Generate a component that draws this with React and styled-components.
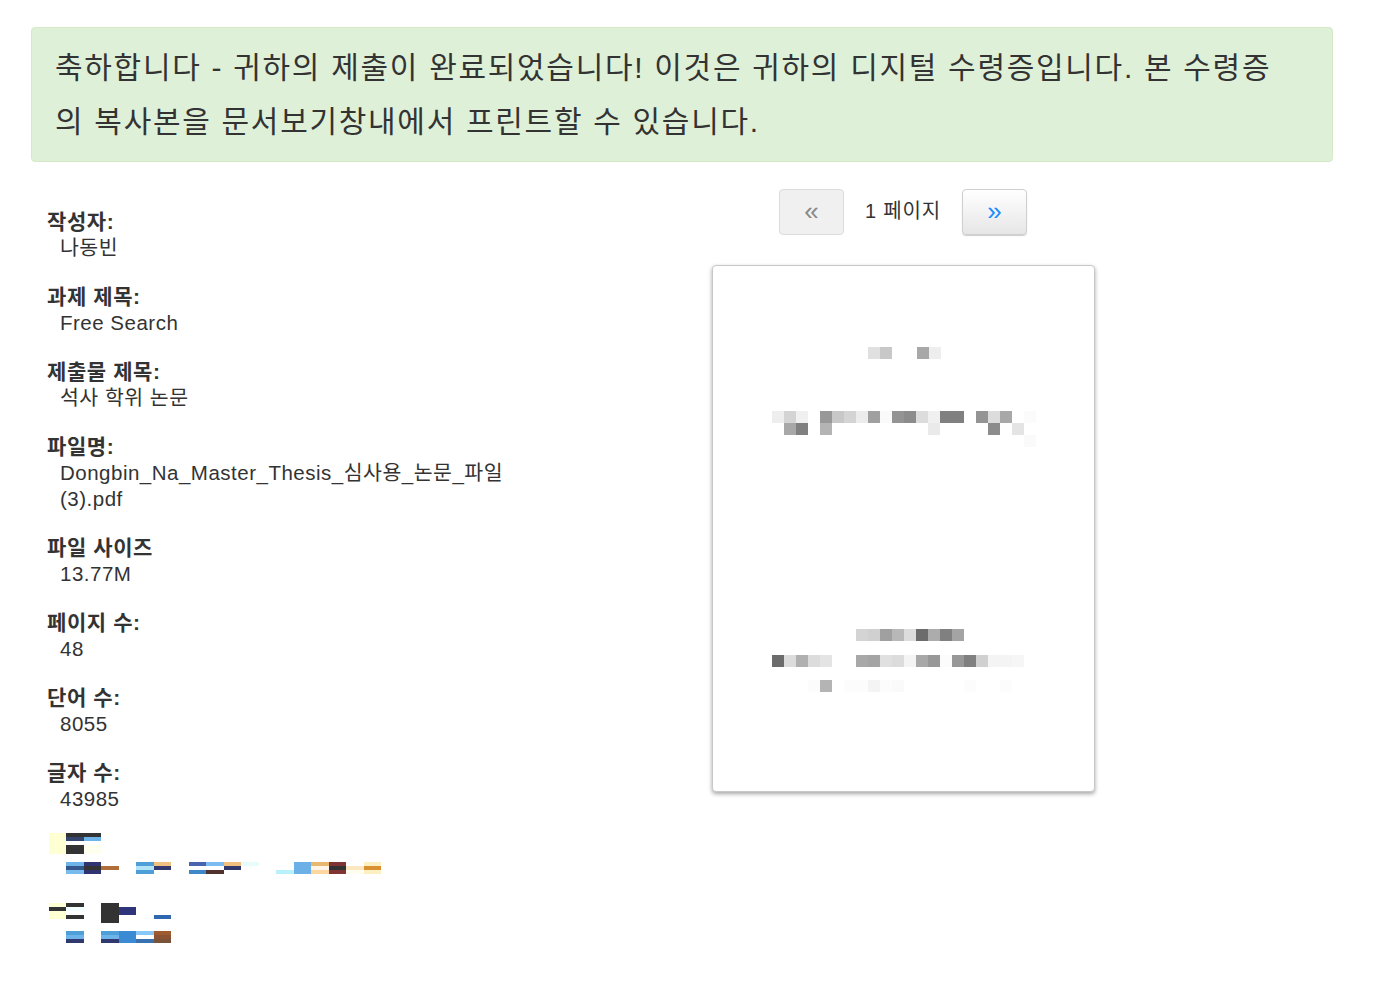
import React from 'react';
import styled, { createGlobalStyle } from 'styled-components';

const GlobalStyle = createGlobalStyle`
  html, body {
    margin: 0;
    padding: 0;
    background: #fff;
  }
  body {
    font-family: "Liberation Sans", "Noto Sans CJK KR", Arial, sans-serif;
    color: #333;
  }
`;

const Page = styled.div`
  width: 1379px;
  padding: 27px 46px 40px 31px;
  box-sizing: border-box;
`;

const Alert = styled.div`
  background: #dff0d8;
  border: 1px solid #d6e9c6;
  border-radius: 4px;
  padding: 13px 44px 12px 23px;
  font-size: 30px;
  letter-spacing: 1.7px;
  line-height: 54px;
  color: #333;
`;

const Main = styled.div`
  display: grid;
  grid-template-columns: 495px 722px;
  margin-top: 27px;
  padding-left: 16px;
`;

const Info = styled.dl`
  margin: 0;
  padding-top: 20px;
`;

const Field = styled.div`
  margin-bottom: 23px;
`;

const Label = styled.dt`
  font-weight: bold;
  font-size: 21px;
  letter-spacing: 0.6px;
  line-height: 26px;
`;

const Value = styled.dd`
  margin: 0;
  padding-left: 13px;
  font-size: 20.5px;
  letter-spacing: 0.5px;
  line-height: 26px;
`;

const Viewer = styled.div`
  display: flex;
  flex-direction: column;
  align-items: center;
`;

const Pager = styled.div`
  display: flex;
  align-items: center;
  gap: 21px;
`;

const PageButton = styled.button`
  width: 65px;
  height: 46px;
  border-radius: 4px;
  border: 1px solid ${p => (p.$disabled ? '#dcdcdc' : '#cfcfcf')};
  background: ${p => (p.$disabled ? '#f0f0f0' : 'linear-gradient(#ffffff, #e6e6e6)')};
  box-shadow: ${p => (p.$disabled ? 'none' : '0 1px 1px rgba(0,0,0,0.2)')};
  color: ${p => (p.$disabled ? '#888' : '#1a8cff')};
  font-family: "Liberation Sans", Arial, sans-serif;
  font-size: 26px;
  line-height: 1;
  padding: 0 0 2px;
  cursor: pointer;
`;

const PageLabel = styled.span`
  font-size: 20px;
  letter-spacing: 0.8px;
  color: #333;
  margin-top: -6px;
`;

const Sheet = styled.div`
  margin-top: 30px;
  width: 383px;
  height: 527px;
  box-sizing: border-box;
  border: 1px solid #c8c8c8;
  border-radius: 4px;
  background: #fff;
  box-shadow: 0 2px 4px rgba(0, 0, 0, 0.35);
  overflow: hidden;
`;

const Mosaic = styled.svg`
  display: block;
  margin: ${p => p.$margin};
`;

const fields = [
  ['작성자:', '나동빈'],
  ['과제 제목:', 'Free Search'],
  ['제출물 제목:', '석사 학위 논문'],
  ['파일명:', 'Dongbin_Na_Master_Thesis_심사용_논문_파일 (3).pdf'],
  ['파일 사이즈', '13.77M'],
  ['페이지 수:', '48'],
  ['단어 수:', '8055'],
  ['글자 수:', '43985'],
];

// blurred thumbnail of the first page: [x, y, grey]
const sheetCells = [
  [156, 82, 'e0'], [168, 82, 'c8'], [205, 82, 'a8'], [217, 82, 'ee'],
  [60, 146, 'ee'], [72, 146, 'd4'], [84, 146, 'f0'], [108, 146, '98'], [120, 146, 'c8'],
  [132, 146, 'd4'], [144, 146, 'ec'], [156, 146, 'a0'], [168, 146, 'fa'], [180, 146, '94'],
  [192, 146, '8c'], [204, 146, 'dc'], [216, 146, 'f0'], [228, 146, '80'], [240, 146, '80'],
  [264, 146, '94'], [276, 146, 'dc'], [288, 146, 'a8'], [312, 146, 'fb'],
  [72, 158, 'a8'], [84, 158, '80'], [108, 158, 'b4'], [216, 158, 'ea'], [276, 158, '8c'],
  [300, 158, 'e4'], [312, 170, 'fa'],
  [144, 364, 'd4'], [156, 364, 'd0'], [168, 364, 'a0'], [180, 364, 'b8'], [192, 364, 'dc'],
  [204, 364, '6c'], [216, 364, 'ac'], [228, 364, '80'], [240, 364, 'a4'],
  [60, 390, '6c'], [72, 390, 'dc'], [84, 390, 'b0'], [96, 390, 'dc'], [108, 390, 'e4'],
  [144, 390, 'a8'], [156, 390, 'a4'], [168, 390, 'e0'], [180, 390, 'dc'], [192, 390, 'f4'],
  [204, 390, 'a8'], [216, 390, '98'], [228, 390, 'fc'], [240, 390, '98'], [252, 390, '80'],
  [264, 390, 'd0'], [276, 390, 'f4'], [288, 390, 'f4'], [300, 390, 'f6'],
  [96, 415, 'fc'], [108, 415, 'b4'], [132, 415, 'fc'], [144, 415, 'fc'], [156, 415, 'f4'],
  [168, 415, 'fc'], [180, 415, 'fa'], [252, 415, 'fc'], [288, 415, 'fc'],
];

// blurred images under the file details: [x, y, w, h, colour]
const imageCells = [
  [0, 0, 17, 21, '#ffffd4'], [17, 0, 35, 4, '#333333'], [17, 4, 18, 4, '#34466e'],
  [35, 4, 17, 4, '#6cb4ea'], [17, 12, 18, 9, '#333333'], [35, 12, 17, 9, '#fffff0'],
  [17, 29, 18, 4, '#6cb4ea'], [17, 33, 18, 4, '#34588e'], [17, 37, 18, 4, '#7abbee'],
  [35, 29, 17, 4, '#2f3470'], [35, 33, 17, 4, '#333333'], [35, 37, 17, 4, '#2f3470'],
  [52, 33, 18, 4, '#b06e3a'],
  [87, 29, 18, 4, '#4e9fd8'], [87, 33, 18, 4, '#b0e4f6'], [87, 37, 18, 4, '#4e9fd8'],
  [105, 29, 17, 4, '#f0c080'], [105, 33, 17, 4, '#33386e'],
  [140, 29, 17, 4, '#4a64b0'], [140, 37, 17, 4, '#3c88c8'],
  [157, 29, 18, 4, '#7cbcf0'], [157, 37, 18, 4, '#51322e'],
  [175, 29, 17, 4, '#f0c080'], [175, 33, 17, 4, '#30386e'], [192, 29, 18, 4, '#e8fcfc'],
  [227, 37, 18, 4, '#b8f0fc'], [245, 29, 17, 12, '#6cb0e8'],
  [262, 29, 18, 4, '#e8b870'], [262, 33, 18, 4, '#fff4e8'], [262, 37, 18, 4, '#fcd8a0'],
  [280, 29, 17, 4, '#803434'], [280, 33, 17, 4, '#333333'], [280, 37, 17, 4, '#803434'],
  [297, 33, 18, 4, '#fce8c0'], [297, 37, 18, 4, '#fffcf0'],
  [315, 29, 17, 4, '#fcf0c0'], [315, 33, 17, 4, '#d89030'], [315, 37, 17, 4, '#fcf0c0'],
  [0, 70, 17, 4, '#ffffd4'], [0, 74, 17, 4, '#333333'], [0, 78, 17, 8, '#ffffd4'],
  [17, 70, 18, 4, '#333333'], [17, 74, 18, 4, '#f4ffff'], [17, 82, 18, 4, '#333333'],
  [52, 70, 18, 20, '#333333'], [70, 74, 17, 8, '#30347a'], [105, 82, 17, 4, '#3068b0'],
  [17, 98, 18, 4, '#4e9fd8'], [17, 102, 18, 4, '#6cb4ea'], [17, 106, 18, 4, '#30386e'],
  [52, 98, 18, 4, '#4e9fd8'], [52, 102, 18, 4, '#6cb4ea'], [52, 106, 18, 4, '#30386e'],
  [70, 98, 17, 12, '#3a8ad4'], [87, 98, 18, 4, '#88c8f8'], [87, 106, 18, 4, '#3870b0'],
  [105, 98, 17, 4, '#a05a30'], [105, 102, 17, 4, '#8a5434'], [105, 106, 17, 4, '#7a5238'],
];

function App() {
  return (
    <Page>
      <GlobalStyle />
      <Alert>
        축하합니다 - 귀하의 제출이 완료되었습니다! 이것은 귀하의 디지털 수령증입니다. 본 수령증의 복사본을 문서보기창내에서 프린트할 수 있습니다.
      </Alert>

      <Main>
        <div>
          <Info>
            {fields.map(([label, value]) => (
              <Field key={label}>
                <Label>{label}</Label>
                <Value>{value}</Value>
              </Field>
            ))}
          </Info>
          <Mosaic width="340" height="112" viewBox="0 0 340 112" $margin="-2px 0 0 2px">
            {imageCells.map(([x, y, w, h, c], i) => (
              <rect key={i} x={x} y={y} width={w} height={h} fill={c} />
            ))}
          </Mosaic>
        </div>

        <Viewer>
          <Pager>
            <PageButton $disabled>«</PageButton>
            <PageLabel>1 페이지</PageLabel>
            <PageButton>»</PageButton>
          </Pager>
          <Sheet>
            <Mosaic width="381" height="525" viewBox="0 0 381 525" $margin="0">
              {sheetCells.map(([x, y, g], i) => (
                <rect key={i} x={x - 1} y={y - 1} width="12" height="12" fill={`#${g}${g}${g}`} />
              ))}
            </Mosaic>
          </Sheet>
        </Viewer>
      </Main>
    </Page>
  );
}

export default App;
